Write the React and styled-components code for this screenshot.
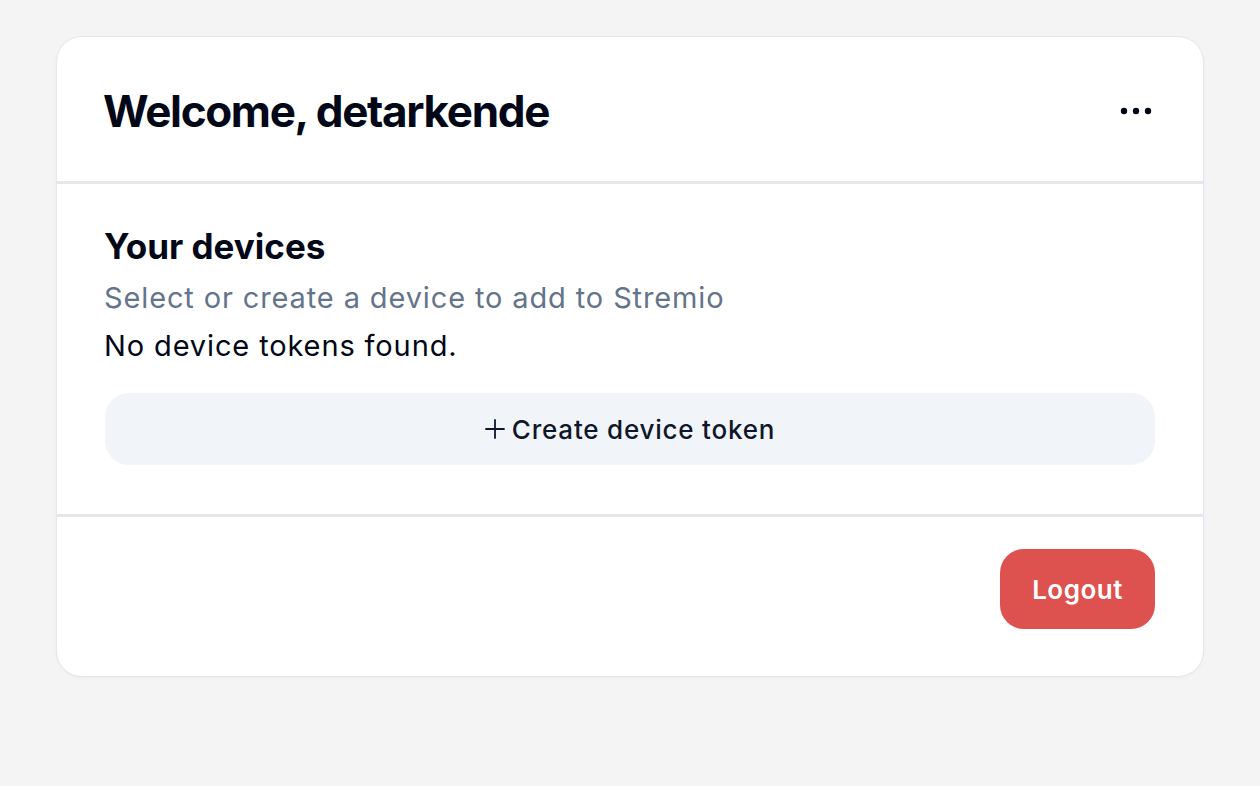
import React from "react";
import styled, { createGlobalStyle } from "styled-components";

const Global = createGlobalStyle`
  html, body { margin: 0; padding: 0; background: #f4f4f4; }
  body { font-family: Inter, "Noto Sans", sans-serif; color: #020817; -webkit-font-smoothing: antialiased; }
  * { box-sizing: border-box; }
`;

const Page = styled.div`
  padding: 36px 56px;
`;

const Card = styled.div`
  width: 1148px;
  background: #fff;
  border: 1.5px solid #e2e8f0;
  border-radius: 26px;
  box-shadow: 0 1px 3px rgba(0,0,0,0.04);
  display: flex;
  flex-direction: column;
  overflow: hidden;
`;

const Header = styled.div`
  display: flex;
  align-items: center;
  justify-content: space-between;
  padding: 50px 48px 46px 46px;
  border-bottom: 3px solid #e5e7eb;
`;

const Title = styled.h1`
  margin: 0;
  font-size: 44px;
  line-height: 48px;
  font-weight: 700;
  letter-spacing: -0.03em;
  color: #020817;
`;

const IconButton = styled.button`
  border: 0;
  background: transparent;
  padding: 0;
  width: 36px;
  height: 36px;
  display: flex;
  align-items: center;
  justify-content: center;
  margin-right: 1px;
  cursor: pointer;
`;

const Section = styled.div`
  display: flex;
  flex-direction: column;
  padding: 42px 48px 49px;
  border-bottom: 3px solid #e5e7eb;
`;

const SectionTitle = styled.h2`
  margin: 0 0 0 -1px;
  font-size: 35px;
  line-height: 40px;
  font-weight: 700;
  letter-spacing: 0;
  color: #020817;
`;

const Text = styled.p`
  margin: ${(p) => p.$mt || 0}px 0 0 -1px;
  font-size: 29px;
  line-height: 40px;
  letter-spacing: 0.03em;
  color: ${(p) => (p.$muted ? "#64748b" : "#020817")};
`;

const WideButton = styled.button`
  margin-top: 27px;
  height: 72px;
  width: 100%;
  border: 0;
  border-radius: 24px;
  background: #f1f5f9;
  color: #0f172a;
  font-family: inherit;
  font-size: 26px;
  font-weight: 500;
  letter-spacing: 0.03em;
  display: flex;
  align-items: center;
  justify-content: center;
  gap: 7px;
  cursor: pointer;
`;

const Footer = styled.div`
  display: flex;
  justify-content: flex-end;
  padding: 32px 48px 47px;
`;

const DangerButton = styled.button`
  height: 80px;
  padding: 0 32px;
  border: 0;
  border-radius: 24px;
  background: #dd524e;
  color: #fff;
  font-family: inherit;
  font-size: 26px;
  font-weight: 600;
  letter-spacing: 0.02em;
  cursor: pointer;
`;

export default function App() {
  return (
    <>
      <Global />
      <Page>
        <Card>
          <Header>
            <Title>Welcome, detarkende</Title>
            <IconButton aria-label="More">
              <svg width="34" height="10" viewBox="0 0 34 10">
                <circle cx="5" cy="5" r="3.2" fill="#020817" />
                <circle cx="17" cy="5" r="3.2" fill="#020817" />
                <circle cx="29" cy="5" r="3.2" fill="#020817" />
              </svg>
            </IconButton>
          </Header>
          <Section>
            <SectionTitle>Your devices</SectionTitle>
            <Text $muted $mt={12}>Select or create a device to add to Stremio</Text>
            <Text $mt={8}>No device tokens found.</Text>
            <WideButton>
              <svg width="20" height="20" viewBox="0 0 20 20" fill="none" stroke="#0f172a" strokeWidth="1.8" strokeLinecap="round">
                <path d="M10 1v18M1 10h18" />
              </svg>
              Create device token
            </WideButton>
          </Section>
          <Footer>
            <DangerButton>Logout</DangerButton>
          </Footer>
        </Card>
      </Page>
    </>
  );
}
